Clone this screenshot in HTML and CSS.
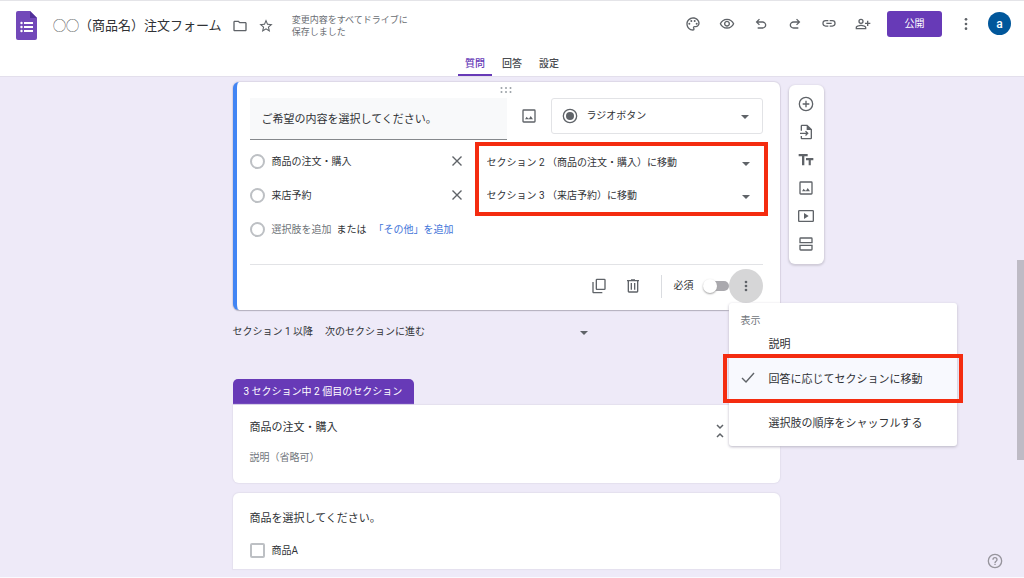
FILE: index.html
```html
<!DOCTYPE html>
<html lang="ja">
<head>
<meta charset="utf-8">
<meta name="viewport" content="width=device-width, initial-scale=1">
<title>◯◯（商品名）注文フォーム</title>
<link rel="stylesheet" href="styles.css">
</head>
<body>
<header class="header">
  <div class="bar">
    <a class="logo" href="#" aria-label="フォーム ホーム">
      <svg width="21" height="29" viewBox="0 0 21 29"><path fill="#7248b9" d="M2 0h12l7 7v20a2 2 0 0 1-2 2H2a2 2 0 0 1-2-2V2a2 2 0 0 1 2-2z"/><path fill="#52309a" d="M14 0l7 7h-7z"/><path fill="#fff" d="M8 11h9v2H8zM8 15h9v2H8zM8 19h9v2H8z"/><circle cx="5.500" cy="12" r="1.200" fill="#fff"/><circle cx="5.500" cy="16" r="1.200" fill="#fff"/><circle cx="5.500" cy="20" r="1.200" fill="#fff"/></svg>
    </a>
    <h1 class="doc-title">◯◯（商品名）注文フォーム</h1>
    <div class="doc-tools">
      <button class="icon-btn" aria-label="移動"><svg class="icon" viewBox="0 0 24 24"><path d="M9.170 6l2 2H20v10H4V6h5.170M10 4H4c-1.100 0-1.990.9-1.990 2L2 18c0 1.100.9 2 2 2h16c1.100 0 2-.9 2-2V8c0-1.100-.9-2-2-2h-8l-2-2z"/></svg></button>
      <button class="icon-btn" aria-label="スター"><svg class="icon" viewBox="0 0 24 24"><path d="M22 9.240l-7.190-.62L12 2 9.190 8.630 2 9.240l5.460 4.730L5.820 21 12 17.270 18.180 21l-1.630-7.030L22 9.240zM12 15.400l-3.760 2.270 1-4.280-3.320-2.880 4.380-.38L12 6.100l1.710 4.040 4.380.38-3.320 2.880 1 4.280L12 15.400z"/></svg></button>
    </div>
    <p class="saved">変更内容をすべてドライブに保存しました</p>
    <div class="actions">
      <button class="icon-btn" aria-label="テーマ"><svg class="icon" viewBox="0 0 24 24"><path d="M12 22C6.490 22 2 17.510 2 12S6.490 2 12 2s10 4.040 10 9c0 3.310-2.690 6-6 6h-1.770c-.28 0-.5.22-.5.5 0 .12.05.23.13.33.41.47.64 1.060.64 1.670A2.500 2.500 0 0 1 12 22zm0-18c-4.410 0-8 3.590-8 8s3.590 8 8 8c.28 0 .5-.22.5-.5a.54.54 0 0 0-.14-.35c-.41-.46-.63-1.050-.63-1.650a2.500 2.500 0 0 1 2.500-2.500H16c2.210 0 4-1.790 4-4 0-3.860-3.590-7-8-7z"/><circle cx="6.500" cy="11.500" r="1.500"/><circle cx="9.500" cy="7.500" r="1.500"/><circle cx="14.500" cy="7.500" r="1.500"/><circle cx="17.500" cy="11.500" r="1.500"/></svg></button>
      <button class="icon-btn" aria-label="プレビュー"><svg class="icon" viewBox="0 0 24 24"><path d="M12 6c3.790 0 7.170 2.130 8.820 5.500C19.170 14.870 15.790 17 12 17s-7.170-2.130-8.820-5.500C4.830 8.130 8.210 6 12 6m0-2C7 4 2.730 7.110 1 11.500 2.730 15.890 7 19 12 19s9.270-3.110 11-7.500C21.270 7.110 17 4 12 4zm0 5a2.500 2.500 0 0 1 0 5 2.500 2.500 0 0 1 0-5m0-2c-2.480 0-4.500 2.020-4.500 4.500S9.520 16 12 16s4.500-2.020 4.500-4.500S14.480 7 12 7z"/></svg></button>
      <button class="icon-btn" aria-label="元に戻す"><svg class="icon" viewBox="0 0 24 24"><path d="M7 19v-2h7.100c1.050 0 1.960-.33 2.740-1s1.160-1.500 1.160-2.500-.39-1.830-1.160-2.500-1.690-1-2.740-1H7.800l2.600 2.600L9 14 4 9l5-5 1.400 1.400L7.800 8h6.300c1.620 0 3 .53 4.160 1.570A5.080 5.080 0 0 1 20 13.500c0 1.570-.58 2.880-1.740 3.930A6.010 6.010 0 0 1 14.100 19H7z"/></svg></button>
      <button class="icon-btn" aria-label="やり直す"><svg class="icon" viewBox="0 0 24 24"><path transform="translate(24 0) scale(-1 1)" d="M7 19v-2h7.100c1.050 0 1.960-.33 2.740-1s1.160-1.500 1.160-2.500-.39-1.830-1.160-2.500-1.690-1-2.740-1H7.800l2.600 2.600L9 14 4 9l5-5 1.400 1.400L7.800 8h6.300c1.620 0 3 .53 4.160 1.570A5.080 5.080 0 0 1 20 13.500c0 1.570-.58 2.880-1.740 3.930A6.010 6.010 0 0 1 14.100 19H7z"/></svg></button>
      <button class="icon-btn" aria-label="リンク"><svg class="icon" viewBox="0 0 24 24"><path d="M3.900 11c0-1.710 1.390-3.100 3.100-3.100h4V6H7a5 5 0 0 0 0 10h4v-1.900H7c-1.710 0-3.100-1.390-3.100-3.100zM8 12h8v-2H8v2zm9-6h-4v1.900h4a3.100 3.100 0 0 1 0 6.200h-4V16h4a5 5 0 0 0 0-10z"/></svg></button>
      <button class="icon-btn" aria-label="共同編集者を追加"><svg class="icon" viewBox="0 0 24 24"><path d="M9 12a4 4 0 1 0 0-8 4 4 0 0 0 0 8zm0-6a2 2 0 1 1 0 4 2 2 0 0 1 0-4zm0 7c-2.670 0-8 1.340-8 4v3h16v-3c0-2.660-5.330-4-8-4zm6 5H3v-1c.2-.71 3.300-2 6-2s5.800 1.290 6 2v1zm5-8V7h-2v3h-3v2h3v3h2v-3h3v-2h-3z"/></svg></button>
      <button class="publish">公開</button>
      <button class="icon-btn" aria-label="その他"><svg class="icon" viewBox="0 0 24 24"><circle cx="12" cy="5" r="2"/><circle cx="12" cy="12" r="2"/><circle cx="12" cy="19" r="2"/></svg></button>
      <button class="avatar" aria-label="アカウント">a</button>
    </div>
  </div>
  <nav class="tabs">
    <a class="tab tab-active" href="#questions">質問</a>
    <a class="tab" href="#answers">回答</a>
    <a class="tab" href="#settings">設定</a>
  </nav>
</header>

<main class="canvas">
  <div class="column">
    <section class="card question">
      <div class="drag"><svg width="12" height="6" viewBox="0 0 12 6" fill="#9aa0a6"><circle cx="1.500" cy="1" r="1"/><circle cx="6" cy="1" r="1"/><circle cx="10.500" cy="1" r="1"/><circle cx="1.500" cy="5" r="1"/><circle cx="6" cy="5" r="1"/><circle cx="10.500" cy="5" r="1"/></svg></div>
      <div class="question-head">
        <input class="question-text" type="text" aria-label="質問" value="ご希望の内容を選択してください。">
        <button class="icon-btn" aria-label="画像を追加"><svg class="icon" viewBox="0 0 24 24"><path d="M20 4v16H4V4h16m0-2H4a2 2 0 0 0-2 2v16c0 1.100.9 2 2 2h16a2 2 0 0 0 2-2V4a2 2 0 0 0-2-2zM10 15l-1.500-2L6 17h12l-3.500-5-2.500 4z"/></svg></button>
        <div class="type">
          <svg class="icon" viewBox="0 0 24 24"><path d="M12 1a11 11 0 1 0 0 22 11 11 0 0 0 0-22zm0 20a9 9 0 1 1 0-18 9 9 0 0 1 0 18z"/><circle cx="12" cy="12" r="6"/></svg>
          <div class="select-wrap"><select class="select" aria-label="質問の形式"><option>ラジオボタン</option></select></div>
        </div>
      </div>
      <div class="choices">
        <div class="choice-list">
          <div class="choice">
            <input class="radio" type="radio" name="wish" id="c1"><label for="c1">商品の注文・購入</label>
            <button class="icon-btn remove" aria-label="選択肢を削除"><svg class="icon-x" viewBox="0 0 12 12"><path d="M1.500 1.500l9 9M10.500 1.500l-9 9"/></svg></button>
          </div>
          <div class="choice">
            <input class="radio" type="radio" name="wish" id="c2"><label for="c2">来店予約</label>
            <button class="icon-btn remove" aria-label="選択肢を削除"><svg class="icon-x" viewBox="0 0 12 12"><path d="M1.500 1.500l9 9M10.500 1.500l-9 9"/></svg></button>
          </div>
          <div class="choice">
            <input class="radio" type="radio" name="wish" id="c3"><label class="muted" for="c3">選択肢を追加</label>
            <span class="or">または</span><a class="other" href="#other">「その他」を追加</a>
          </div>
        </div>
        <div class="jumps">
          <div class="select-wrap"><select class="select" aria-label="商品の注文・購入の移動先"><option>セクション 2 （商品の注文・購入）に移動</option></select></div>
          <div class="select-wrap"><select class="select" aria-label="来店予約の移動先"><option>セクション 3 （来店予約）に移動</option></select></div>
        </div>
      </div>
      <div class="card-foot">
        <button class="icon-btn" aria-label="コピーを作成"><svg class="icon" viewBox="0 0 24 24"><path d="M20 1H9a2 2 0 0 0-2 2v13c0 1.100.9 2 2 2h11a2 2 0 0 0 2-2V3a2 2 0 0 0-2-2zm0 15H9V3h11v13zM2 6v15c0 1.100.9 2 2 2h13v-2H4V6H2z"/></svg></button>
        <button class="icon-btn" aria-label="削除"><svg class="icon" viewBox="0 0 24 24"><path fill-rule="evenodd" d="M15 3V2H9v1H3v2h1v15c0 1.100.9 2 2 2h12a2 2 0 0 0 2-2V5h1V3h-6zM6 5h12v15H6zM8.500 7.500h2v10h-2zM13.500 7.500h2v10h-2z"/></svg></button>
        <div class="required">
          <label for="req">必須</label><input class="toggle" type="checkbox" id="req">
        </div>
        <div class="more">
          <button class="more-btn" aria-label="その他のオプション"><svg class="icon" viewBox="0 0 24 24"><circle cx="12" cy="6" r="2"/><circle cx="12" cy="12" r="2"/><circle cx="12" cy="18" r="2"/></svg></button>
          <div class="menu">
            <p class="menu-head">表示</p>
            <button class="menu-item menu-first">説明</button>
            <button class="menu-item menu-checked"><svg class="check" viewBox="0 0 14 11"><path d="M1 6l4 4 8-9"/></svg>回答に応じてセクションに移動</button>
            <button class="menu-item menu-last">選択肢の順序をシャッフルする</button>
          </div>
        </div>
      </div>
    </section>

    <div class="after">
      <label for="next">セクション 1 以降</label>
      <div class="select-wrap after-select"><select class="select" id="next"><option>次のセクションに進む</option></select></div>
    </div>

    <section class="section">
      <p class="section-tag">3 セクション中 2 個目のセクション</p>
      <div class="card section-card">
        <div>
          <h2 class="card-title">商品の注文・購入</h2>
          <p class="description">説明（省略可）</p>
        </div>
        <button class="icon-btn" aria-label="折りたたむ"><svg class="fold" viewBox="0 0 8 14"><path d="M1 1l3 3 3-3M1 13l3-3 3 3"/></svg></button>
      </div>
    </section>

    <section class="card product">
      <h2 class="card-title">商品を選択してください。</h2>
      <div class="choice product-choice"><input class="box" type="checkbox" id="pa"><label for="pa">商品A</label></div>
    </section>
  </div>

  <aside class="toolbar" aria-label="追加ツール">
    <button class="icon-btn" aria-label="質問を追加"><svg class="icon" viewBox="0 0 24 24"><path d="M13 7h-2v4H7v2h4v4h2v-4h4v-2h-4V7zm-1-6a11 11 0 1 0 0 22 11 11 0 0 0 0-22zm0 20a9 9 0 1 1 0-18 9 9 0 0 1 0 18z"/></svg></button>
    <button class="icon-btn" aria-label="質問をインポート"><svg class="icon" viewBox="0 0 24 24"><path d="M14 1H6a2 2 0 0 0-2 2v7h2V3h7v6h6v12H6v-3H4v3c0 1.100.9 2 2 2h13a2 2 0 0 0 2-2V8l-7-7zM12 10l-1.400 1.400L12.200 13H3v2h9.200l-1.600 1.600L12 18l4-4z"/></svg></button>
    <button class="icon-btn" aria-label="タイトルと説明を追加"><svg class="icon" viewBox="0 0 24 24"><path d="M1 3v3.500h5V20h3.500V6.500h5V3H1zm22 6H12v3.200h4V20h3.200v-7.800H23V9z"/></svg></button>
    <button class="icon-btn" aria-label="画像を追加"><svg class="icon" viewBox="0 0 24 24"><path d="M20 4v16H4V4h16m0-2H4a2 2 0 0 0-2 2v16c0 1.100.9 2 2 2h16a2 2 0 0 0 2-2V4a2 2 0 0 0-2-2zM10 15l-1.500-2L6 17h12l-3.500-5-2.500 4z"/></svg></button>
    <button class="icon-btn" aria-label="動画を追加"><svg class="icon" viewBox="0 0 24 24"><path d="M9 7.500v9l7-4.500-7-4.500zM22 3H2a2 2 0 0 0-2 2v14c0 1.100.9 2 2 2h20a2 2 0 0 0 2-2V5a2 2 0 0 0-2-2zm0 16H2V5h20v14z"/></svg></button>
    <button class="icon-btn" aria-label="セクションを追加"><svg class="icon" viewBox="0 0 24 24"><path d="M20 15v5H4v-5h16m2-2H2v7c0 1.100.9 2 2 2h16a2 2 0 0 0 2-2v-7zM20 4v5H4V4h16m0-2H4a2 2 0 0 0-2 2v7h20V4a2 2 0 0 0-2-2z"/></svg></button>
  </aside>
</main>

<button class="help" aria-label="ヘルプ"><svg class="icon" viewBox="0 0 24 24"><path d="M11 18h2v-2h-2v2zm1-17a11 11 0 1 0 0 22 11 11 0 0 0 0-22zm0 20a9 9 0 1 1 0-18 9 9 0 0 1 0 18zm0-15a4 4 0 0 0-4 4h2a2 2 0 1 1 4 0c0 2-3 1.750-3 5h2c0-2.250 3-2.500 3-5a4 4 0 0 0-4-4z"/></svg></button>
<div class="scroll-thumb"></div>
</body>
</html>
```
FILE: styles.css
```css
* {
  box-sizing: border-box;
}

body {
  margin: 0;
  min-height: 100vh;
  display: flex;
  flex-direction: column;
  background: #eeeaf8;
  color: #303236;
  font: 10px/16px Roboto, "Noto Sans CJK JP", sans-serif;
  overflow: hidden;
}

h1, h2, p {
  margin: 0;
  font-weight: 400;
}

a {
  color: inherit;
  text-decoration: none;
}

button, input, select {
  margin: 0;
  padding: 0;
  border: 0;
  background: none;
  color: inherit;
  font: inherit;
}

.icon {
  display: block;
  width: 16px;
  height: 16px;
  fill: #5f6368;
}

.icon-btn {
  display: grid;
  place-items: center;
  width: 16px;
  height: 16px;
}

/* Header */
.header {
  background: #fff;
  border-top: 1px solid #e4e4e8;
  border-bottom: 1px solid #e3dfec;
}

.bar {
  display: flex;
  align-items: center;
  height: 48px;
  padding: 0 13px 0 16px;
}

.logo {
  display: flex;
  margin-right: 16px;
}

.doc-title {
  padding-top: 1px;
  font-size: 13px;
  line-height: 20px;
  white-space: nowrap;
}

.doc-tools {
  display: flex;
  gap: 10px;
  margin: 2px 18px 0 10px;
}

.saved {
  width: 120px;
  padding-top: 1px;
  color: #6a6e73;
  font-size: 9px;
  line-height: 12px;
}

.actions {
  display: flex;
  align-items: center;
  gap: 18px;
  margin-left: auto;
  padding-bottom: 3px;
}

.publish {
  width: 55px;
  height: 26px;
  margin: 0 -2px;
  border-radius: 3px;
  background: #673ab7;
  color: #fff;
}

.avatar {
  width: 23px;
  height: 23px;
  margin-left: -4px;
  border-radius: 50%;
  background: #01579b;
  color: #fff;
  font-size: 12px;
  font-weight: 500;
}

.tabs {
  display: flex;
  justify-content: center;
  gap: 3px;
  color: #4a4d51;
  font-weight: 500;
}

.tab {
  height: 27px;
  padding: 7px 7px 0;
}

.tab-active {
  border-bottom: 2px solid #673ab7;
  border-radius: 2px 2px 0 0;
  color: #673ab7;
}

/* Canvas */
.canvas {
  flex: 1;
  display: grid;
  grid-template-columns: 1fr minmax(0, 547px) 1fr;
  align-items: start;
  padding: 5px 12px 5px 0;
  border-bottom: 1px solid #fafafe;
}

.column {
  grid-column: 2;
}

.card {
  border-radius: 6px;
  background: #fff;
  box-shadow: 0 0 1px 1px #e4e0ee;
}

.question {
  position: relative;
  z-index: 1;
  padding: 5px 17px 0 13px;
  border-left: 4px solid #4285f4;
  box-shadow: 0 1px 1px #b4b0be, 0 0 1px 1px #dcd8e6;
}

.drag {
  display: flex;
  justify-content: center;
  height: 11px;
}

.question-head {
  display: flex;
  align-items: flex-start;
  gap: 14px;
}

.question-head > .icon-btn {
  margin-top: 10px;
}

.question-text {
  flex: 1;
  min-width: 0;
  height: 42px;
  padding: 0 12px 2px;
  border-bottom: 1px solid #85888c;
  background: #f8f9fa;
  font-size: 11px;
}

.type {
  display: flex;
  align-items: center;
  gap: 9px;
  width: 212px;
  height: 36px;
  padding: 0 0 0 10px;
  border: 1px solid #e2e3e6;
  border-radius: 3px;
}

.select-wrap {
  position: relative;
  flex: 1;
}

.select-wrap::after {
  content: "";
  position: absolute;
  top: 50%;
  right: 13px;
  margin-top: -1px;
  border: 4px solid transparent;
  border-top-color: #5f6368;
  border-bottom: 0;
  pointer-events: none;
}

.select {
  display: block;
  width: 100%;
  height: 34px;
  appearance: none;
}

.choices {
  display: grid;
  grid-template-columns: 1fr 293px;
  gap: 10px;
  margin: 2px -5px 18px 0;
}

.choice-list {
  padding-top: 2px;
}

.choice {
  display: flex;
  align-items: center;
  gap: 7px;
  height: 34px;
}

.choice label,
.choice span,
.choice a {
  padding-top: 1px;
}

.radio,
.box {
  width: 15px;
  height: 15px;
  border: 2px solid #bdc0c4;
  appearance: none;
}

.radio {
  border-radius: 50%;
}

.box {
  border-radius: 2px;
}

.remove {
  margin-left: auto;
}

.icon-x {
  width: 12px;
  height: 12px;
  fill: none;
  stroke: #5f6368;
  stroke-width: 1.4;
}

.muted {
  color: #70757a;
}

.or {
  margin-left: -2px;
}

.other {
  color: #4274d9;
}

.jumps {
  align-self: start;
  padding: 0 4px 0 8px;
  border: 4px solid #f42c10;
}

.jumps .select {
  height: 33px;
}

.jumps .select-wrap::after {
  right: 10px;
}

.card-foot {
  display: flex;
  align-items: center;
  gap: 18px;
  justify-content: flex-end;
  height: 46px;
  padding-bottom: 3px;
  border-top: 1px solid #e2e3e6;
}

.required {
  display: flex;
  align-items: center;
  gap: 9px;
  height: 23px;
  margin: 0 -18px 0 2px;
  padding-left: 12px;
  border-left: 1px solid #dadce0;
}

.toggle {
  position: relative;
  width: 26px;
  height: 10px;
  border-radius: 5px;
  background: linear-gradient(90deg, transparent 5px, #aaa9ae 5px);
  appearance: none;
}

.toggle::before {
  content: "";
  position: absolute;
  top: -2px;
  left: 0;
  width: 14px;
  height: 14px;
  border-radius: 50%;
  background: #fff;
  box-shadow: 0 1px 2px #a0a0a0;
}

.more {
  position: relative;
}

.more-btn {
  display: grid;
  place-items: center;
  width: 34px;
  height: 34px;
  border-radius: 50%;
  background: #d6d6d7;
}

.menu {
  position: absolute;
  top: 100%;
  left: 0;
  width: 228px;
  padding: 10px 0 5px;
  border-radius: 3px;
  background: #fff;
  box-shadow: 0 1px 3px #bab6c4;
}

.menu-head {
  padding-left: 12px;
  color: #70757a;
}

.menu-item {
  display: flex;
  align-items: center;
  width: 100%;
  padding: 2px 0 0 40px;
  font-size: 11px;
  white-space: nowrap;
}

.menu-first {
  height: 25px;
  padding-top: 6px;
}

.menu-checked {
  width: 240px;
  height: 49px;
  margin-left: -6px;
  padding-left: 14px;
  gap: 14px;
  border: 4px solid #f42c10;
  background: linear-gradient(#f8f9fe, #f8f9fe) center / 228px 100% no-repeat;
}

.menu-last {
  height: 38px;
  padding-top: 4px;
}

.check {
  width: 14px;
  height: 11px;
  margin-bottom: 4px;
  fill: none;
  stroke: #5f6368;
  stroke-width: 1.4;
}

/* Section flow */
.after {
  display: flex;
  align-items: center;
  gap: 12px;
  padding: 5px 0 30px;
}

.after-select {
  flex: 0 1 276px;
}

.section-tag {
  width: fit-content;
  padding: 5px 12px 5px 11px;
  border-radius: 5px 5px 0 0;
  background: #673ab7;
  color: #fff;
}

.section-card {
  display: flex;
  justify-content: space-between;
  padding: 15px 52px 17px 17px;
  border-top-left-radius: 0;
}

.section-card .icon-btn {
  margin-top: 3px;
}

.card-title {
  font-size: 11px;
  line-height: 16px;
}

.description {
  margin-top: 14px;
  color: #70757a;
}

.fold {
  width: 8px;
  height: 14px;
  fill: none;
  stroke: #5f6368;
  stroke-width: 1.5;
}

.product {
  margin-top: 10px;
  padding: 18px 17px 2px;
  border-radius: 6px 6px 0 0;
}

.product-choice {
  margin-top: 6px;
}

/* Floating tools */
.toolbar {
  display: flex;
  flex-direction: column;
  align-items: center;
  gap: 12px;
  width: 35px;
  margin: 3px 0 0 9px;
  padding: 11px 0 12px;
  border-radius: 6px;
  background: #fff;
  box-shadow: 0 1px 2px 1px #d0ccd9;
}

.help {
  position: fixed;
  right: 21px;
  bottom: 9px;
}

.help .icon {
  fill: #96949c;
}

.scroll-thumb {
  position: fixed;
  top: 45%;
  right: 0;
  width: 7px;
  height: 200px;
  background: #bebbc5;
}
```
